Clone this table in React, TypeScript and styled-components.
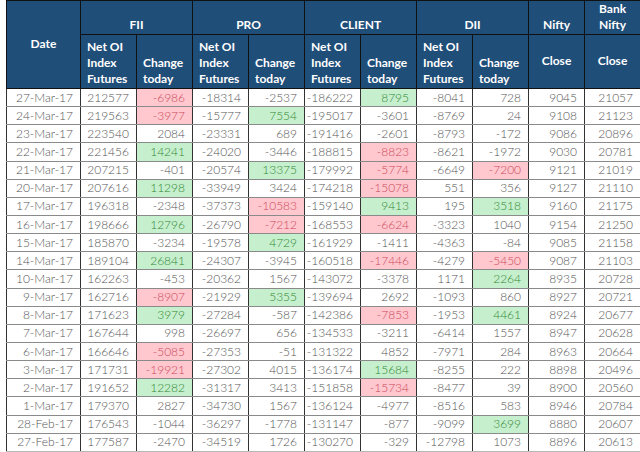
import React from 'react';
import styled, {createGlobalStyle} from 'styled-components';

const GlobalStyle = createGlobalStyle`
  html, body {
    margin: 0;
    padding: 0;
    background: #ffffff;
    overflow: hidden;
  }
`

type Tone = 'r' | 'g' | undefined

// each value may carry a tone: "-6986r" → red, "8795g" → green
const rows: string[] = [
    '27-Mar-17|212577|-6986r|-18314|-2537|-186222|8795g|-8041|728|9045|21057',
    '24-Mar-17|219563|-3977r|-15777|7554g|-195017|-3601|-8769|24|9108|21123',
    '23-Mar-17|223540|2084|-23331|689|-191416|-2601|-8793|-172|9086|20896',
    '22-Mar-17|221456|14241g|-24020|-3446|-188815|-8823r|-8621|-1972|9030|20781',
    '21-Mar-17|207215|-401|-20574|13375g|-179992|-5774r|-6649|-7200r|9121|21019',
    '20-Mar-17|207616|11298g|-33949|3424|-174218|-15078r|551|356|9127|21110',
    '17-Mar-17|196318|-2348|-37373|-10583r|-159140|9413g|195|3518g|9160|21175',
    '16-Mar-17|198666|12796g|-26790|-7212r|-168553|-6624r|-3323|1040|9154|21250',
    '15-Mar-17|185870|-3234|-19578|4729g|-161929|-1411|-4363|-84|9085|21158',
    '14-Mar-17|189104|26841g|-24307|-3945|-160518|-17446r|-4279|-5450r|9087|21103',
    '10-Mar-17|162263|-453|-20362|1567|-143072|-3378|1171|2264g|8935|20728',
    '9-Mar-17|162716|-8907r|-21929|5355g|-139694|2692|-1093|860|8927|20721',
    '8-Mar-17|171623|3979g|-27284|-587|-142386|-7853r|-1953|4461g|8924|20677',
    '7-Mar-17|167644|998|-26697|656|-134533|-3211|-6414|1557|8947|20628',
    '6-Mar-17|166646|-5085r|-27353|-51|-131322|4852|-7971|284|8963|20664',
    '3-Mar-17|171731|-19921r|-27302|4015|-136174|15684g|-8255|222|8898|20496',
    '2-Mar-17|191652|12282g|-31317|3413|-151858|-15734r|-8477|39|8900|20560',
    '1-Mar-17|179370|2827|-34730|1567|-136124|-4977|-8516|583|8946|20784',
    '28-Feb-17|176543|-1044|-36297|-1778|-131147|-877|-9099|3699g|8880|20607',
    '27-Feb-17|177587|-2470|-34519|1726|-130270|-329|-12798|1073|8896|20613',
]

const groups = ['FII', 'PRO', 'CLIENT', 'DII']

const parse = (raw: string): { text: string, tone: Tone } => {
    const last = raw.slice(-1)
    if (last === 'r' || last === 'g') return {text: raw.slice(0, -1), tone: last}
    return {text: raw, tone: undefined}
}

const App = () => {
    return (
        <>
            <GlobalStyle/>
            <Page>
                <Table>
                    <colgroup>
                        <col style={{width: 74}}/>
                        {Array.from({length: 10}).map((_, i) => <col key={i} style={{width: 56}}/>)}
                    </colgroup>
                    <thead>
                    <GroupRow>
                        <HeadCell rowSpan={2} $align="center" $valign="middle">Date</HeadCell>
                        {groups.map(g => (
                            <HeadCell key={g} colSpan={2} $align="center" $valign="bottom">{g}</HeadCell>
                        ))}
                        <HeadCell $align="center" $valign="bottom">Nifty</HeadCell>
                        <HeadCell $align="center" $valign="bottom">Bank<br/>Nifty</HeadCell>
                    </GroupRow>
                    <SubRow>
                        {groups.map(g => (
                            <React.Fragment key={g}>
                                <HeadCell $align="left" $valign="bottom">Net OI<br/>Index<br/>Futures</HeadCell>
                                <HeadCell $align="left" $valign="bottom">Change<br/>today</HeadCell>
                            </React.Fragment>
                        ))}
                        <HeadCell $align="center" $valign="middle">Close</HeadCell>
                        <HeadCell $align="center" $valign="middle">Close</HeadCell>
                    </SubRow>
                    </thead>
                    <tbody>
                    {rows.map((line, i) => (
                        <BodyRow key={i}>
                            {line.split('|').map((raw, j) => {
                                const {text, tone} = parse(raw)
                                return <Cell key={j} $tone={tone}>{text}</Cell>
                            })}
                        </BodyRow>
                    ))}
                    </tbody>
                </Table>
            </Page>
        </>
    );
};

export default App;

const Page = styled.div`
  width: 640px;
  height: 452px;
  overflow: hidden;
  background: #ffffff;
`

const Table = styled.table`
  border-collapse: collapse;
  table-layout: fixed;
  width: 634px;
  margin-left: 6px;
  font-family: Lato, 'Liberation Sans', sans-serif;
`

const GroupRow = styled.tr`
  height: 32px;
`

const SubRow = styled.tr`
  height: 54px;
`

const HeadCell = styled.th<{ $align: 'left' | 'center', $valign: 'middle' | 'bottom' }>`
  background: #1f4e79;
  color: #ffffff;
  font-weight: 700;
  font-size: 12px;
  line-height: 16px;
  border: 1px solid #111111;
  text-align: ${p => p.$align};
  vertical-align: ${p => p.$valign};
  padding: ${p => p.$align === 'left' ? '0 2px 1px 6px' : '0 2px 1px'};
  white-space: nowrap;
`

const BodyRow = styled.tr`
  height: 18.15px;

  &:last-child td {
    border-bottom-color: #b8b8b8;
  }
`

const Cell = styled.td<{ $tone?: Tone }>`
  font-size: 12px;
  font-weight: 300;
  line-height: 16px;
  text-align: right;
  padding: 0 7px 0 0;
  white-space: nowrap;
  color: ${p => p.$tone === 'r' ? '#cc4a5a' : p.$tone === 'g' ? '#338833' : '#555555'};
  background: ${p => p.$tone === 'r' ? '#ffc7ce' : p.$tone === 'g' ? '#c6efce' : '#ffffff'};
  border-left: 1px solid #333333;
  border-right: 1px solid #333333;
  border-top: 1px solid #8a8a8a;
  border-bottom: 1px solid #8a8a8a;
`
